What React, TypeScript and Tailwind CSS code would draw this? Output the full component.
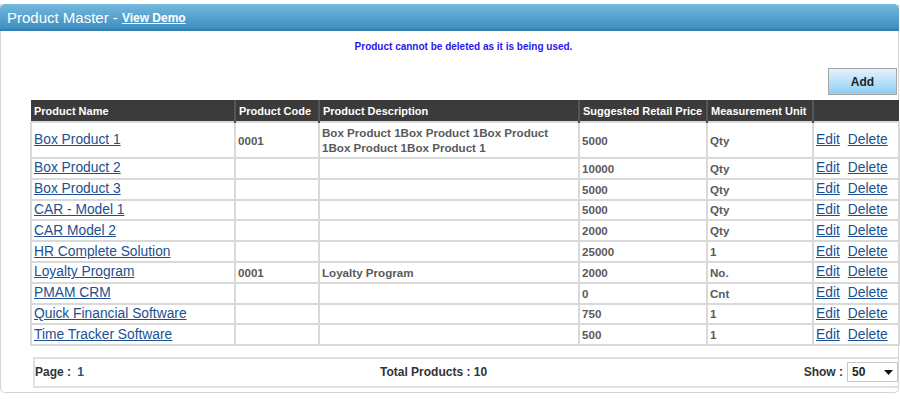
import React from "react";

type Product = {
	name: string;
	code: string;
	description: string;
	price: string;
	unit: string;
};

const products: Product[] = [
	{
		name: "Box Product 1",
		code: "0001",
		description: "Box Product 1Box Product 1Box Product 1Box Product 1Box Product 1",
		price: "5000",
		unit: "Qty",
	},
	{ name: "Box Product 2", code: "", description: "", price: "10000", unit: "Qty" },
	{ name: "Box Product 3", code: "", description: "", price: "5000", unit: "Qty" },
	{ name: "CAR - Model 1", code: "", description: "", price: "5000", unit: "Qty" },
	{ name: "CAR Model 2", code: "", description: "", price: "2000", unit: "Qty" },
	{ name: "HR Complete Solution", code: "", description: "", price: "25000", unit: "1" },
	{ name: "Loyalty Program", code: "0001", description: "Loyalty Program", price: "2000", unit: "No." },
	{ name: "PMAM CRM", code: "", description: "", price: "0", unit: "Cnt" },
	{ name: "Quick Financial Software", code: "", description: "", price: "750", unit: "1" },
	{ name: "Time Tracker Software", code: "", description: "", price: "500", unit: "1" },
];

const cell = "border-2 border-[#d9d9d9] px-[2px] py-0 align-middle";
const grayText = "block text-[11.6px] font-bold text-[#5a5a5a] leading-[15px]";
const link = "block text-[13.8px] text-[#1d4f91] underline leading-[16px]";

export default function App() {
	return (
		<div className="w-[900px] h-[399px] bg-white font-['Liberation_Sans',Arial,sans-serif] pt-[4px] overflow-hidden">
			<div className="w-[899px] h-[389px] flex flex-col border-r border-b border-l border-[#d4d4d4] rounded-b-[5px]">
				{/* title bar */}
				<div className="h-[27px] shrink-0 flex items-center pl-[7px] pt-[2px] rounded-t-[5px] bg-gradient-to-b from-[#74b9de] to-[#3d8ec0] border-b-2 border-[#337fae] -mx-px">
					<span className="text-[15px] text-white leading-none">Product Master - </span>
					<a className="ml-[4px] text-[12px] font-bold text-white underline leading-none">View Demo</a>
				</div>

				<div className="h-[31px] shrink-0 flex items-center justify-center pl-[28px]">
					<span className="text-[10px] font-bold text-[#2a16f0]">
						Product cannot be deleted as it is being used.
					</span>
				</div>

				<div className="flex justify-end pr-[1px] pt-[6px] pb-[5px]">
					<button className="w-[69px] h-[27px] border border-[#a5a5a5] bg-gradient-to-b from-[#e3f2fc] to-[#8ecdf3] text-[12px] font-bold text-[#222]">
						Add
					</button>
				</div>

				<div className="ml-[29px] mr-[1px]">
					<table className="w-[868px] border-collapse table-fixed text-[12px] leading-[15px]">
						<colgroup>
							<col className="w-[204px]" />
							<col className="w-[84px]" />
							<col className="w-[260px]" />
							<col className="w-[128px]" />
							<col className="w-[106px]" />
							<col className="w-[86px]" />
						</colgroup>
						<thead>
							<tr className="h-[22px] bg-[#3b3b3b] text-white text-[11px] font-bold text-left">
								<th className="px-[3px] pt-[2px] pb-0 border-r-2 border-[#555] whitespace-nowrap">Product Name</th>
								<th className="px-[3px] pt-[2px] pb-0 border-r-2 border-[#555] whitespace-nowrap">Product Code</th>
								<th className="px-[3px] pt-[2px] pb-0 border-r-2 border-[#555] whitespace-nowrap">Product Description</th>
								<th className="px-[3px] pt-[2px] pb-0 border-r-2 border-[#555] whitespace-nowrap">Suggested Retail Price</th>
								<th className="px-[3px] pt-[2px] pb-0 border-r-2 border-[#555] whitespace-nowrap">Measurement Unit</th>
								<th></th>
							</tr>
						</thead>
						<tbody>
							{products.map((p, i) => (
								<tr key={p.name} className={i === 0 ? "h-[36px]" : "h-[20.8px]"}>
									<td className={cell}>
										<a className={link}>{p.name}</a>
									</td>
									<td className={cell}>
										<span className={grayText}>{p.code}</span>
									</td>
									<td className={cell}>
										<span className={grayText}>{p.description}</span>
									</td>
									<td className={cell}>
										<span className={grayText}>{p.price}</span>
									</td>
									<td className={cell}>
										<span className={grayText}>{p.unit}</span>
									</td>
									<td className={cell}>
										<div className="flex gap-[8px] pl-0">
											<a className={link}>Edit</a>
											<a className={link}>Delete</a>
										</div>
									</td>
								</tr>
							))}
						</tbody>
					</table>
				</div>

				{/* pager */}
				<div className="mt-[11px] ml-[32px] h-[31px] shrink-0 border-2 border-r-0 border-[#e0e0e0] flex items-center text-[12px] font-bold text-[#333] pb-[1px]">
					<div className="w-[345px]">
						Page : <span className="ml-[3px] text-[#1d4f91]">1</span>
					</div>
					<div className="flex-1">Total Products : 10</div>
					<div className="flex items-center gap-[4px]">
						<span>Show :</span>
						<div className="w-[51px] h-[20px] border border-[#c8c8c8] bg-white flex items-center justify-between px-[4px]">
							<span className="text-[12px] font-bold text-[#222]">50</span>
							<svg width="9" height="5" viewBox="0 0 9 5">
								<path d="M0 0h9L4.5 5z" fill="#111" />
							</svg>
						</div>
					</div>
				</div>
			</div>
		</div>
	);
}
